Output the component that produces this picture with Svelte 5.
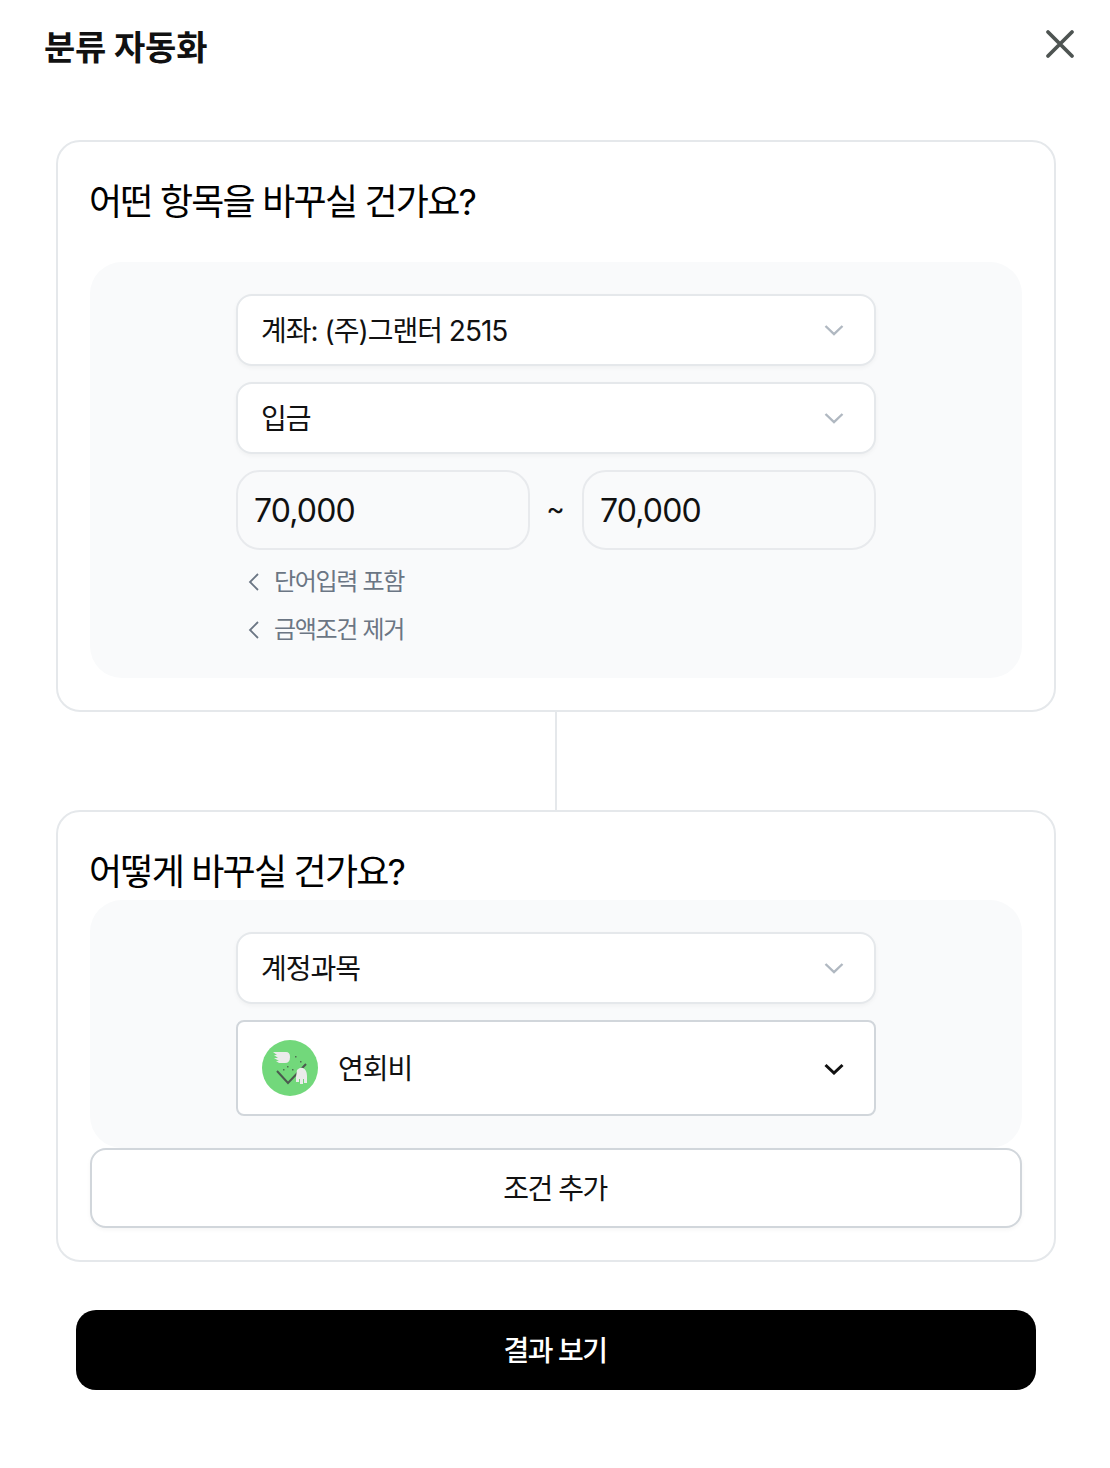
<script>
  const chevron = "M1 2 L9.5 10 L18 2";
</script>

<div class="page">
  <header class="head">
    <h1>분류 자동화</h1>
    <button class="close" aria-label="닫기">
      <svg width="30" height="30" viewBox="0 0 30 30"><path d="M3 3 L27 27 M27 3 L3 27" /></svg>
    </button>
  </header>

  <section class="card first">
    <h2 class="q1">어떤 항목을 바꾸실 건가요?</h2>
    <div class="panel">
      <div class="select">
        <span>계좌: (주)그랜터 2515</span>
        <svg class="chev" width="20" height="12" viewBox="0 0 19 12"><path d={chevron} /></svg>
      </div>
      <div class="select">
        <span>입금</span>
        <svg class="chev" width="20" height="12" viewBox="0 0 19 12"><path d={chevron} /></svg>
      </div>
      <div class="range">
        <div class="num">70,000</div>
        <span class="tilde">~</span>
        <div class="num">70,000</div>
      </div>
      <div class="links">
        <div class="link">
          <svg width="12" height="20" viewBox="0 0 12 20"><path d="M10 2 L2 10 L10 18" /></svg>
          <span>단어입력 포함</span>
        </div>
        <div class="link">
          <svg width="12" height="20" viewBox="0 0 12 20"><path d="M10 2 L2 10 L10 18" /></svg>
          <span>금액조건 제거</span>
        </div>
      </div>
    </div>
  </section>

  <div class="connector"></div>

  <section class="card second">
    <h2 class="q2">어떻게 바꾸실 건가요?</h2>
    <div class="panel tight">
      <div class="select">
        <span>계정과목</span>
        <svg class="chev" width="20" height="12" viewBox="0 0 19 12"><path d={chevron} /></svg>
      </div>
      <div class="select active">
        <div class="sel-left">
          <svg class="avatar" width="56" height="56" viewBox="0 0 56 56">
            <circle cx="28" cy="28" r="28" fill="#72d87b" />
            <path d="M15 31 L26 43 L44 24" fill="none" stroke="#4b5a4f" stroke-width="2" />
            <path d="M11 12 H24 Q28 12 28 17 Q28 23 23 23 H17 L14 21 H17 L12 18 H16 L12 15 H15 Z" fill="#ebebeb" />
            <path d="M35 30 Q38 27 41 28 Q45 30 45 36 V43 H42 V39 H41 V44 H38 V39 H37 V42 H34 V37 Z" fill="#ebebeb" />
            <g fill="#4f6f52">
              <rect x="25" y="26" width="1.5" height="1.5" />
              <rect x="30" y="29" width="1.5" height="1.5" />
              <rect x="21" y="29" width="1.5" height="1.5" />
              <rect x="33" y="16" width="1.5" height="1.5" />
              <rect x="38" y="21" width="1.5" height="1.5" />
            </g>
          </svg>
          <span>연회비</span>
        </div>
        <svg class="chev dark" width="20" height="12" viewBox="0 0 19 12"><path d={chevron} /></svg>
      </div>
    </div>
    <button class="add">조건 추가</button>
  </section>

  <div class="footer">
    <button class="primary">결과 보기</button>
  </div>
</div>

<style>
  :global(body) {
    margin: 0;
    background: #fff;
  }
  .page {
    width: 1110px;
    height: 1468px;
    box-sizing: border-box;
    padding-left: 2px;
    font-family: "Inter", "Noto Sans CJK KR", sans-serif;
    color: #000;
    display: flex;
    flex-direction: column;
    align-items: center;
    overflow: hidden;
  }
  .head {
    width: 100%;
    box-sizing: border-box;
    height: 140px;
    padding: 27px 35px 0 42px;
    display: flex;
    justify-content: space-between;
    align-items: flex-start;
    flex: none;
  }
  h1 {
    margin: 0;
    font-size: 34px;
    line-height: 42px;
    font-weight: 700;
    color: #111;
    letter-spacing: -0.2px;
  }
  .close {
    border: 0;
    background: none;
    padding: 2px 0 0;
    width: 30px;
    height: 33px;
  }
  .close path {
    stroke: #4e5452;
    stroke-width: 3.8;
    stroke-linecap: round;
    fill: none;
  }
  .card {
    width: 1000px;
    box-sizing: border-box;
    border: 2px solid #e5e8eb;
    border-radius: 24px;
    padding: 0 32px;
    background: #fff;
    flex: none;
  }
  .first {
    height: 572px;
  }
  .second {
    height: 452px;
  }
  h2 {
    margin: 0 0 0 -1px;
    font-size: 36px;
    font-weight: 400;
    line-height: 44px;
    letter-spacing: -1.8px;
  }
  .q1 {
    padding: 38px 0 38px;
  }
  .q2 {
    padding: 38px 0 6px;
  }
  .panel {
    background: #f9fafb;
    border-radius: 32px;
    padding: 32px 146px;
    display: flex;
    flex-direction: column;
    gap: 16px;
    height: 416px;
    box-sizing: border-box;
  }
  .panel.tight {
    height: 248px;
  }
  .select {
    height: 72px;
    flex: none;
    box-sizing: border-box;
    background: #fff;
    border: 2px solid #e5e8eb;
    border-radius: 16px;
    box-shadow: 0 2px 4px rgba(0, 0, 0, 0.04);
    display: flex;
    align-items: center;
    justify-content: space-between;
    padding: 0 30px 0 23px;
    font-size: 28px;
    line-height: 40px;
    letter-spacing: -1px;
    color: #111;
  }
  .select span {
    padding-top: 2px;
  }
  .select.active {
    height: 96px;
    border-color: #d1d6db;
    border-radius: 8px;
    box-shadow: none;
  }
  .sel-left {
    display: flex;
    align-items: center;
    gap: 20px;
    padding-left: 1px;
  }
  .avatar {
    display: block;
  }
  .chev.dark {
    margin-top: 2px;
  }
  .chev path {
    stroke: #b0b8c1;
    stroke-width: 2.4;
    fill: none;
  }
  .chev.dark path {
    stroke: #111;
    stroke-width: 3;
  }
  .range {
    display: flex;
    align-items: center;
    justify-content: space-between;
    flex: none;
  }
  .num {
    width: 294px;
    height: 80px;
    box-sizing: border-box;
    border: 2px solid #e8eaed;
    border-radius: 24px;
    padding: 0 16px;
    display: flex;
    align-items: center;
    font-size: 32px;
    letter-spacing: -0.85px;
    color: #111;
  }
  .tilde {
    font-size: 28px;
    color: #111;
    padding: 0 1px 2px 0;
  }
  .links {
    display: flex;
    flex-direction: column;
    gap: 8px;
    margin-top: -7px;
  }
  .link {
    height: 40px;
    display: flex;
    align-items: center;
    gap: 14px;
    padding-left: 12px;
    font-size: 24px;
    letter-spacing: -1.3px;
    color: #6b7684;
  }
  .link path {
    stroke: #6b7684;
    stroke-width: 1.8;
    fill: none;
  }
  .link svg {
    margin-top: 6px;
  }
  .connector {
    width: 2px;
    height: 98px;
    background: #e5e8eb;
    flex: none;
  }
  .add {
    width: 100%;
    height: 80px;
    margin-top: 0;
    padding: 0 2px 2px 0;
    background: #fff;
    border: 2px solid #d1d6db;
    border-radius: 16px;
    box-shadow: 0 2px 4px rgba(0, 0, 0, 0.04);
    font: inherit;
    font-size: 28px;
    letter-spacing: -1.5px;
    color: #111;
  }
  .footer {
    padding-top: 48px;
    flex: none;
  }
  .primary {
    width: 960px;
    height: 80px;
    padding: 0 2px 2px 0;
    background: #000;
    border: 0;
    border-radius: 20px;
    color: #fff;
    font: inherit;
    font-size: 28px;
    font-weight: 500;
    letter-spacing: -1.5px;
  }
</style>
